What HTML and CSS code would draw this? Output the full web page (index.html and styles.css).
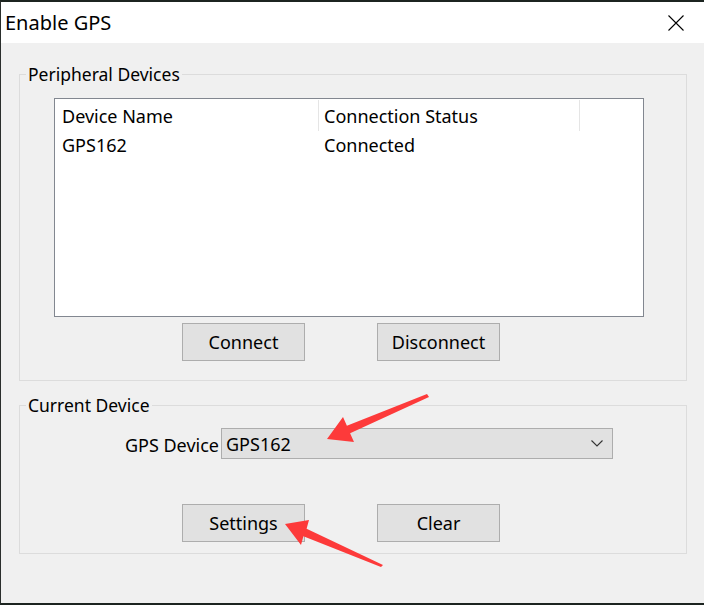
FILE: index.html
```html
<!DOCTYPE html>
<html lang="en">
<head>
    <meta charset="UTF-8">
    <meta name="viewport" content="width=device-width, initial-scale=1.0">
    <title>Enable GPS</title>
    <link rel="stylesheet" href="styles.css">
</head>
<body>
    <div class="janela">
        <div class="barra-titulo">
            <span class="titulo">Enable GPS</span>
            <svg class="fechar" width="16" height="16" viewBox="0 0 16 16">
                <path d="M0.5 0.5 L15.5 15.5 M15.5 0.5 L0.5 15.5" stroke="#000" stroke-width="1.1" fill="none"/>
            </svg>
        </div>

        <fieldset class="grupo grupo-perifericos">
            <legend>Peripheral Devices</legend>
            <div class="lista">
                <div class="linha cabecalho">
                    <div class="col col-nome">Device Name</div>
                    <div class="col col-status">Connection Status</div>
                </div>
                <div class="linha">
                    <div class="col col-nome">GPS162</div>
                    <div class="col col-status">Connected</div>
                </div>
            </div>
            <div class="botoes">
                <button class="botao">Connect</button>
                <button class="botao">Disconnect</button>
            </div>
        </fieldset>

        <fieldset class="grupo grupo-atual">
            <legend>Current Device</legend>
            <div class="campo">
                <label class="rotulo">GPS Device</label>
                <div class="combo">
                    <span>GPS162</span>
                    <svg width="12" height="7" viewBox="0 0 12 7">
                        <path d="M0.5 0.5 L6 6 L11.5 0.5" stroke="#333" stroke-width="1.1" fill="none"/>
                    </svg>
                </div>
            </div>
            <div class="botoes botoes-atual">
                <button class="botao">Settings</button>
                <button class="botao">Clear</button>
            </div>
        </fieldset>
    </div>

    <!-- setas vermelhas de anotacao -->
    <svg class="setas" width="704" height="605" viewBox="0 0 704 605">
        <polygon points="327,439 343,417 346.9,425.8 427,394 429,397 350.1,433.2 354,442" fill="#fd3a3a"/>
        <polygon points="285,524 309,520 306.6,528.8 383,565 381,567 303.4,536.2 301,545" fill="#fd3a3a"/>
    </svg>
</body>
</html>
```

FILE: styles.css
```css
* {
    box-sizing: border-box;
}
body {
    margin: 0;
    width: 704px;
    height: 605px;
    overflow: hidden;
    font-family: "Noto Sans", "Open Sans", sans-serif;
    font-size: 18px;
    color: #000;
    background-color: #f0f0f0;
    position: relative;
}
.janela {
    height: 605px;
    border-top: 2px solid #1c2420;
    border-left: 1px solid #2a2e2c;
    border-bottom: 2px solid #1c2420;
    display: flex;
    flex-direction: column;
}
.barra-titulo {
    height: 41px;
    background: #fff;
    display: flex;
    align-items: center;
    justify-content: space-between;
    padding: 0 20px 0 4px;
}
.titulo {
    font-size: 20px;
}
.fechar {
    margin-top: 1px;
}
.grupo {
    width: 668px;
    margin: 0 0 0 18px;
    border: 1px solid #dcdcdc;
    padding: 12px 0 19px 34px;
    min-width: 0;
}
.grupo legend {
    margin-left: -28px;
    padding: 0 2px;
    line-height: 24px;
    font-size: 17.5px;
}
.grupo-perifericos {
    margin-top: 19px;
}
.grupo-atual {
    margin-top: 12px;
    padding: 11px 0 11px 0;
}
.grupo-atual legend {
    margin-left: 6px;
}
.lista {
    width: 590px;
    height: 219px;
    background: #fff;
    border: 1px solid #828790;
    padding-top: 1px;
}
.linha {
    display: flex;
    height: 28px;
    align-items: center;
}
.cabecalho {
    height: 31px;
}
.col {
    height: 100%;
    display: flex;
    align-items: center;
    white-space: nowrap;
}
.col-nome {
    width: 264px;
    padding-left: 7px;
}
.col-status {
    width: 261px;
    padding-left: 5px;
}
.cabecalho .col {
    border-right: 1px solid #e5e5e5;
}
.botoes {
    display: flex;
    gap: 72px;
    margin: 6px 0 0 128px;
}
.botoes-atual {
    margin: 45px 0 0 162px;
}
.botao {
    width: 123px;
    height: 38px;
    background: #e1e1e1;
    border: 1px solid #adadad;
    border-radius: 0;
    font-family: inherit;
    font-size: 18px;
    color: #000;
    padding: 0;
}
.campo {
    display: flex;
    align-items: center;
}
.rotulo {
    width: 199px;
    text-align: right;
    padding-top: 2px;
}
.combo {
    width: 392px;
    height: 31px;
    margin-left: 2px;
    background: #e1e1e1;
    border: 1px solid #adadad;
    display: flex;
    align-items: center;
    justify-content: space-between;
    padding: 0 9px 0 4px;
}
.setas {
    position: absolute;
    top: 0;
    left: 0;
    pointer-events: none;
}
```
